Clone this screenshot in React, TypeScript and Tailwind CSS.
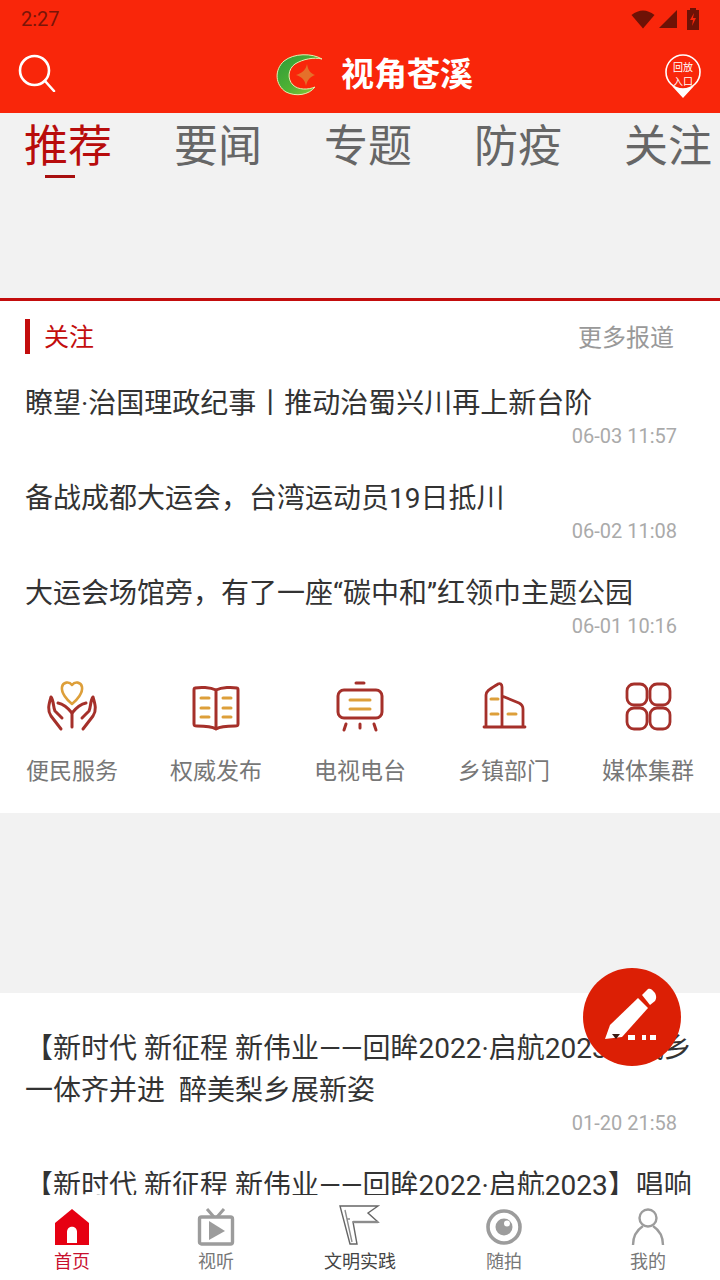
const cjk = "font-['Roboto','Noto_Sans_CJK_SC',sans-serif]";

const tabs = ['推荐', '要闻', '专题', '防疫', '关注'];

const newsTop = [
  { title: '瞭望·治国理政纪事丨推动治蜀兴川再上新台阶', date: '06-03 11:57' },
  { title: '备战成都大运会，台湾运动员19日抵川', date: '06-02 11:08' },
  { title: '大运会场馆旁，有了一座“碳中和”红领巾主题公园', date: '06-01 10:16' },
];

function StatusIcons() {
  return (
    <div className="flex items-center gap-[5px] pr-[20px]">
      <svg width="24" height="20" viewBox="0 0 24 20" className="mr-[-1px]">
        <path d="M0.5 6 Q12 -3 23.5 6 L12 19.5 Z" fill="#6e1206" />
      </svg>
      <svg width="18" height="18" viewBox="0 0 18 18">
        <path d="M18 0 V18 H0 Z" fill="#6e1206" />
      </svg>
      <svg width="14" height="22" viewBox="0 0 14 22" className="ml-[4px]">
        <path d="M4 0 H10 V2 H13 V22 H1 V2 H4 Z" fill="#6e1206" />
        <path d="M8 5 L4 12 H7 L6 18 L10 10 H7 Z" fill="#f9260a" />
      </svg>
    </div>
  );
}

function Logo() {
  return (
    <svg width="48" height="42" viewBox="0 0 48 42">
      <defs>
        <linearGradient id="logoGreen" x1="0" y1="0" x2="1" y2="1">
          <stop offset="0" stopColor="#2f9a3a" />
          <stop offset="0.55" stopColor="#4fb233" />
          <stop offset="1" stopColor="#9ccb3a" />
        </linearGradient>
      </defs>
      <path
        d="M46 5 C36 -1 18 -1 8 7 C-2 16 -1 31 10 38 C20 43 33 41 39 33 C32 36 22 36 17 31 C11 25 12 15 19 10 C27 5 38 3 46 5 Z"
        fill="url(#logoGreen)"
        stroke="#e6efb0"
        strokeWidth="1"
      />
      <path d="M31 10 C32 16 34 19 39 21 C34 23 31 26 30 32 C29 26 26 23 20 21 C26 19 30 16 31 10 Z" fill="#e5702a" />
    </svg>
  );
}

function ReplayPin() {
  return (
    <div className="relative h-[44px] w-[38px]">
      <svg width="38" height="44" viewBox="0 0 38 44" className="absolute left-0 top-0">
        <circle cx="19" cy="18" r="17" fill="#f9260a" stroke="#fff" strokeWidth="1.6" />
        <path d="M8 32 Q19 38 30 32 L19 44 Z" fill="#fff" />
      </svg>
      <div className={`absolute left-0 top-[7px] w-full text-center text-[10px] leading-[14px] text-white ${cjk}`}>
        回放
        <br />
        入口
      </div>
    </div>
  );
}

function Header() {
  return (
    <div className="h-[113px] bg-[#f9260a]">
      <div className="flex h-[38px] items-center justify-between">
        <span className={`pl-[21px] text-[20px] text-[#7a1508] ${cjk}`}>2:27</span>
        <StatusIcons />
      </div>
      <div className="flex h-[75px] items-start justify-between pl-[18px] pr-[18px] pt-[16px]">
        <svg width="38" height="38" viewBox="0 0 38 38">
          <circle cx="16.5" cy="16.5" r="14.5" fill="none" stroke="#fff" strokeWidth="2.6" />
          <path d="M27 27 L36 37" stroke="#fff" strokeWidth="2.6" strokeLinecap="round" />
        </svg>
        <div className="ml-[29px] flex items-center gap-[17px]">
          <Logo />
          <span className="mt-[-6px] whitespace-nowrap font-['Noto_Sans_CJK_SC',sans-serif] text-[33px] font-bold leading-[40px] text-white">
            视角苍溪
          </span>
        </div>
        <ReplayPin />
      </div>
    </div>
  );
}

function Tabs() {
  return (
    <div className="relative ml-[-7px] flex h-[67px] w-[750px]">
      {tabs.map((tab, i) => (
        <div key={tab} className="relative w-[150px] text-center">
          <span
            className={`text-[44px] leading-[68px] ${cjk} ${i === 0 ? 'text-[#b80c0c]' : 'text-[#666666]'}`}
          >
            {tab}
          </span>
          {i === 0 && <div className="absolute left-[52px] top-[62px] h-[3px] w-[30px] bg-[#a80f0f]" />}
        </div>
      ))}
    </div>
  );
}

function NewsRow({ title, date }: { title: string; date: string }) {
  return (
    <div className="h-[95px]">
      <div className="h-[40px] whitespace-nowrap text-[28px] leading-[44px] text-[#333333]">{title}</div>
      <div className="pr-[43px] text-right text-[20px] leading-[28px] text-[#aaaaaa]">{date}</div>
    </div>
  );
}

const iconRed = '#a5302a';
const iconGold = '#dd9f3a';

function ServiceIcon({ index }: { index: number }) {
  const common = { fill: 'none', strokeWidth: 2.6, strokeLinecap: 'round' as const, strokeLinejoin: 'round' as const };
  if (index === 0) {
    return (
      <svg width="52" height="52" viewBox="0 0 52 52" {...common}>
        <path d="M26 24 C21 20 15 13 16 7 C17 2 23 1 26 5 C29 1 35 2 36 7 C37 13 31 20 26 24 Z" stroke={iconGold} />
        <path d="M5 17 C3 24 1 30 5 36 L15 49 M5 17 C8 21 7 27 9 31 L16 38 M26 47 V33 C22 28 17 24 12 23" stroke={iconRed} strokeWidth={3} />
        <path d="M47 17 C49 24 51 30 47 36 L37 49 M47 17 C44 21 45 27 43 31 L36 38 M26 33 C30 28 35 24 40 23" stroke={iconRed} strokeWidth={3} />
      </svg>
    );
  }
  if (index === 1) {
    return (
      <svg width="52" height="52" viewBox="0 0 52 52" {...common}>
        <path d="M26 10 C20 7 10 7 5 8 C4 8 4 9 4 10 V44 C4 46 5 46 7 46 C14 46 21 46 26 49 C31 46 38 46 45 46 C47 46 48 46 48 44 V10 C48 9 48 8 47 8 C42 7 32 7 26 10 Z M26 10 V49" stroke={iconRed} strokeWidth={3} />
        <path d="M11 18 H19 M11 28 H19 M11 37 H19 M33 18 H41 M33 28 H41 M33 37 H41" stroke={iconGold} strokeWidth={3} />
      </svg>
    );
  }
  if (index === 2) {
    return (
      <svg width="52" height="52" viewBox="0 0 52 52" {...common}>
        <path d="M22 3 H30" stroke={iconRed} strokeWidth={3} />
        <rect x="4" y="10" width="44" height="28" rx="6" stroke={iconRed} strokeWidth={3} />
        <path d="M16 20 H36 M16 29 H36" stroke={iconGold} strokeWidth={3} />
        <path d="M12 44 L10 50 M26 44 V48 M40 44 L42 50" stroke={iconRed} strokeWidth={3} />
      </svg>
    );
  }
  if (index === 3) {
    return (
      <svg width="52" height="52" viewBox="0 0 52 52" {...common}>
        <path d="M6 47 H47 M8 46 V15 C8 11 12 9 20 4 C22 3 24 4 24 7 V46 M24 16 L41 23 C43 24 45 26 45 29 V46" stroke={iconRed} strokeWidth={2.8} />
        <path d="M13 19 H20 M13 34 H20 M30 34 H38" stroke={iconGold} strokeWidth={3} />
      </svg>
    );
  }
  return (
    <svg width="52" height="52" viewBox="0 0 52 52" {...common}>
      <g stroke={iconRed} strokeWidth={2.8}>
        <rect x="5" y="4" width="20" height="21" rx="7" />
        <rect x="28" y="4" width="20" height="21" rx="7" />
        <rect x="5" y="28" width="20" height="21" rx="7" />
        <rect x="28" y="28" width="20" height="21" rx="7" />
      </g>
    </svg>
  );
}

function ServiceGrid() {
  const items = ['便民服务', '权威发布', '电视电台', '乡镇部门', '媒体集群'];
  return (
    <div className="grid h-[146px] grid-cols-5 pt-[13px]">
      {items.map((label, i) => (
        <div key={label} className="flex flex-col items-center">
          <ServiceIcon index={i} />
          <span className="mt-[22px] text-[23px] leading-[36px] text-[#777777]">{label}</span>
        </div>
      ))}
    </div>
  );
}

function NavIcon({ index }: { index: number }) {
  const gray = '#9c9c9c';
  if (index === 0) {
    return (
      <svg width="36" height="38" viewBox="0 0 36 38">
        <path d="M18 1 L35 15 V37 H1 V15 Z" fill="#e60012" />
        <path d="M13 35 V24 C13 17 23 17 23 24 V35 Z" fill="#fff" />
      </svg>
    );
  }
  if (index === 1) {
    return (
      <svg width="38" height="38" viewBox="0 0 38 38" fill="none">
        <path d="M10 1 L17 9 M27 1 L20 9" stroke={gray} strokeWidth="3" />
        <rect x="2.5" y="9" width="33" height="27" rx="2" stroke={gray} strokeWidth="3.4" />
        <path d="M12 13 L28 23 L12 32 Z" fill={gray} />
      </svg>
    );
  }
  if (index === 2) {
    return (
      <svg width="44" height="42" viewBox="0 0 44 42" fill="none" stroke="#666666" strokeWidth="1.4">
        <path d="M2 2 H40 L30 9 L40 18 H15 L19 40 H12 Z" />
        <path d="M7 6 L14 38 M9 15 H12" stroke="#8c8c8c" />
        <path d="M15 18 H40" stroke="#8c8c8c" strokeWidth="2.4" />
      </svg>
    );
  }
  if (index === 3) {
    return (
      <svg width="38" height="38" viewBox="0 0 38 38" fill="none">
        <circle cx="19" cy="19" r="16" stroke={gray} strokeWidth="3.6" />
        <circle cx="19" cy="19" r="8.5" fill={gray} />
        <circle cx="22" cy="15.5" r="3" fill="#fff" />
      </svg>
    );
  }
  return (
    <svg width="34" height="38" viewBox="0 0 34 38" fill="none" stroke={gray} strokeWidth="2.4">
      <circle cx="17" cy="10" r="8.5" />
      <path d="M12 18 C6 22 2 28 2 37 M22 18 C28 22 32 28 32 37" />
    </svg>
  );
}

function BottomNav() {
  const items = [
    { label: '首页', color: 'text-[#c8102e]' },
    { label: '视听', color: 'text-[#777777]' },
    { label: '文明实践', color: 'text-[#444444]' },
    { label: '随拍', color: 'text-[#777777]' },
    { label: '我的', color: 'text-[#777777]' },
  ];
  return (
    <div className="grid h-[85px] grid-cols-5 bg-white">
      {items.map((item, i) => (
        <div key={item.label} className="flex flex-col items-center">
          <div className="flex h-[55px] items-end pb-[4px]">
            <NavIcon index={i} />
          </div>
          <span className={`mt-[1px] text-[18px] leading-[22px] ${item.color}`}>{item.label}</span>
        </div>
      ))}
    </div>
  );
}

function EditButton() {
  return (
    <div className="absolute left-[583px] top-[968px] flex h-[98px] w-[98px] items-center justify-center rounded-full bg-[#dc1f05]">
      <svg width="98" height="98" viewBox="0 0 98 98">
        <path d="M22 71 L27 57 L55 30 L65 40 L39 69 Z" fill="#fff" />
        <path d="M59 27 L65 21 C67 20 69 21 72 25 C74 29 73 31 72 33 L67 37 Z" fill="#fff" />
        <path d="M29 66 H37 L33 71 Z" fill="#3a1a12" />
        <path d="M45 67 H52 V72 H45 Z M59 67 H63 V72 H59 Z M67 67 H73 V72 H67 Z" fill="#fff" />
      </svg>
    </div>
  );
}

export default function App() {
  return (
    <div
      className={`relative flex h-[1280px] w-[720px] flex-col overflow-hidden bg-white font-['Roboto','Noto_Sans_CJK_SC',sans-serif]`}
    >
      <Header />
      <div className="min-h-0 flex-1 overflow-hidden">
        <div className="bg-[#f2f2f2]">
          <Tabs />
          <div className="h-[118px]" />
        </div>
        <div className="h-[3px] bg-[#c30d0d]" />
        <div className="bg-white pl-[25px]">
          <div className="flex h-[81px] items-start justify-between pr-[46px] pt-[18px]">
            <div className="flex h-[35px] items-center border-l-[5px] border-[#c30d0d] pl-[14px] pt-[2px] text-[25px] text-[#c30d0d]">
              关注
            </div>
            <div className="text-[24px] leading-[39px] text-[#999999]">更多报道</div>
          </div>
          {newsTop.map((n) => (
            <NewsRow key={n.date} title={n.title} date={n.date} />
          ))}
        </div>
        <ServiceGrid />
        <div className="h-[180px] bg-[#f2f2f2]" />
        <div className="bg-white pl-[25px] pt-[35px]">
          <div className="whitespace-nowrap text-[28px] leading-[42px] text-[#333333]">
            【新时代 新征程 新伟业——回眸2022·启航2023】城乡
            <br />
            一体齐并进{'\u00a0\u00a0'}醉美梨乡展新姿
          </div>
          <div className="mt-[-3px] pr-[43px] text-right text-[20px] leading-[28px] text-[#aaaaaa]">01-20 21:58</div>
          <div className="mt-[28px] whitespace-nowrap text-[28px] leading-[42px] text-[#333333]">
            【新时代 新征程 新伟业——回眸2022·启航2023】唱响
          </div>
        </div>
      </div>
      <BottomNav />
      <EditButton />
    </div>
  );
}
